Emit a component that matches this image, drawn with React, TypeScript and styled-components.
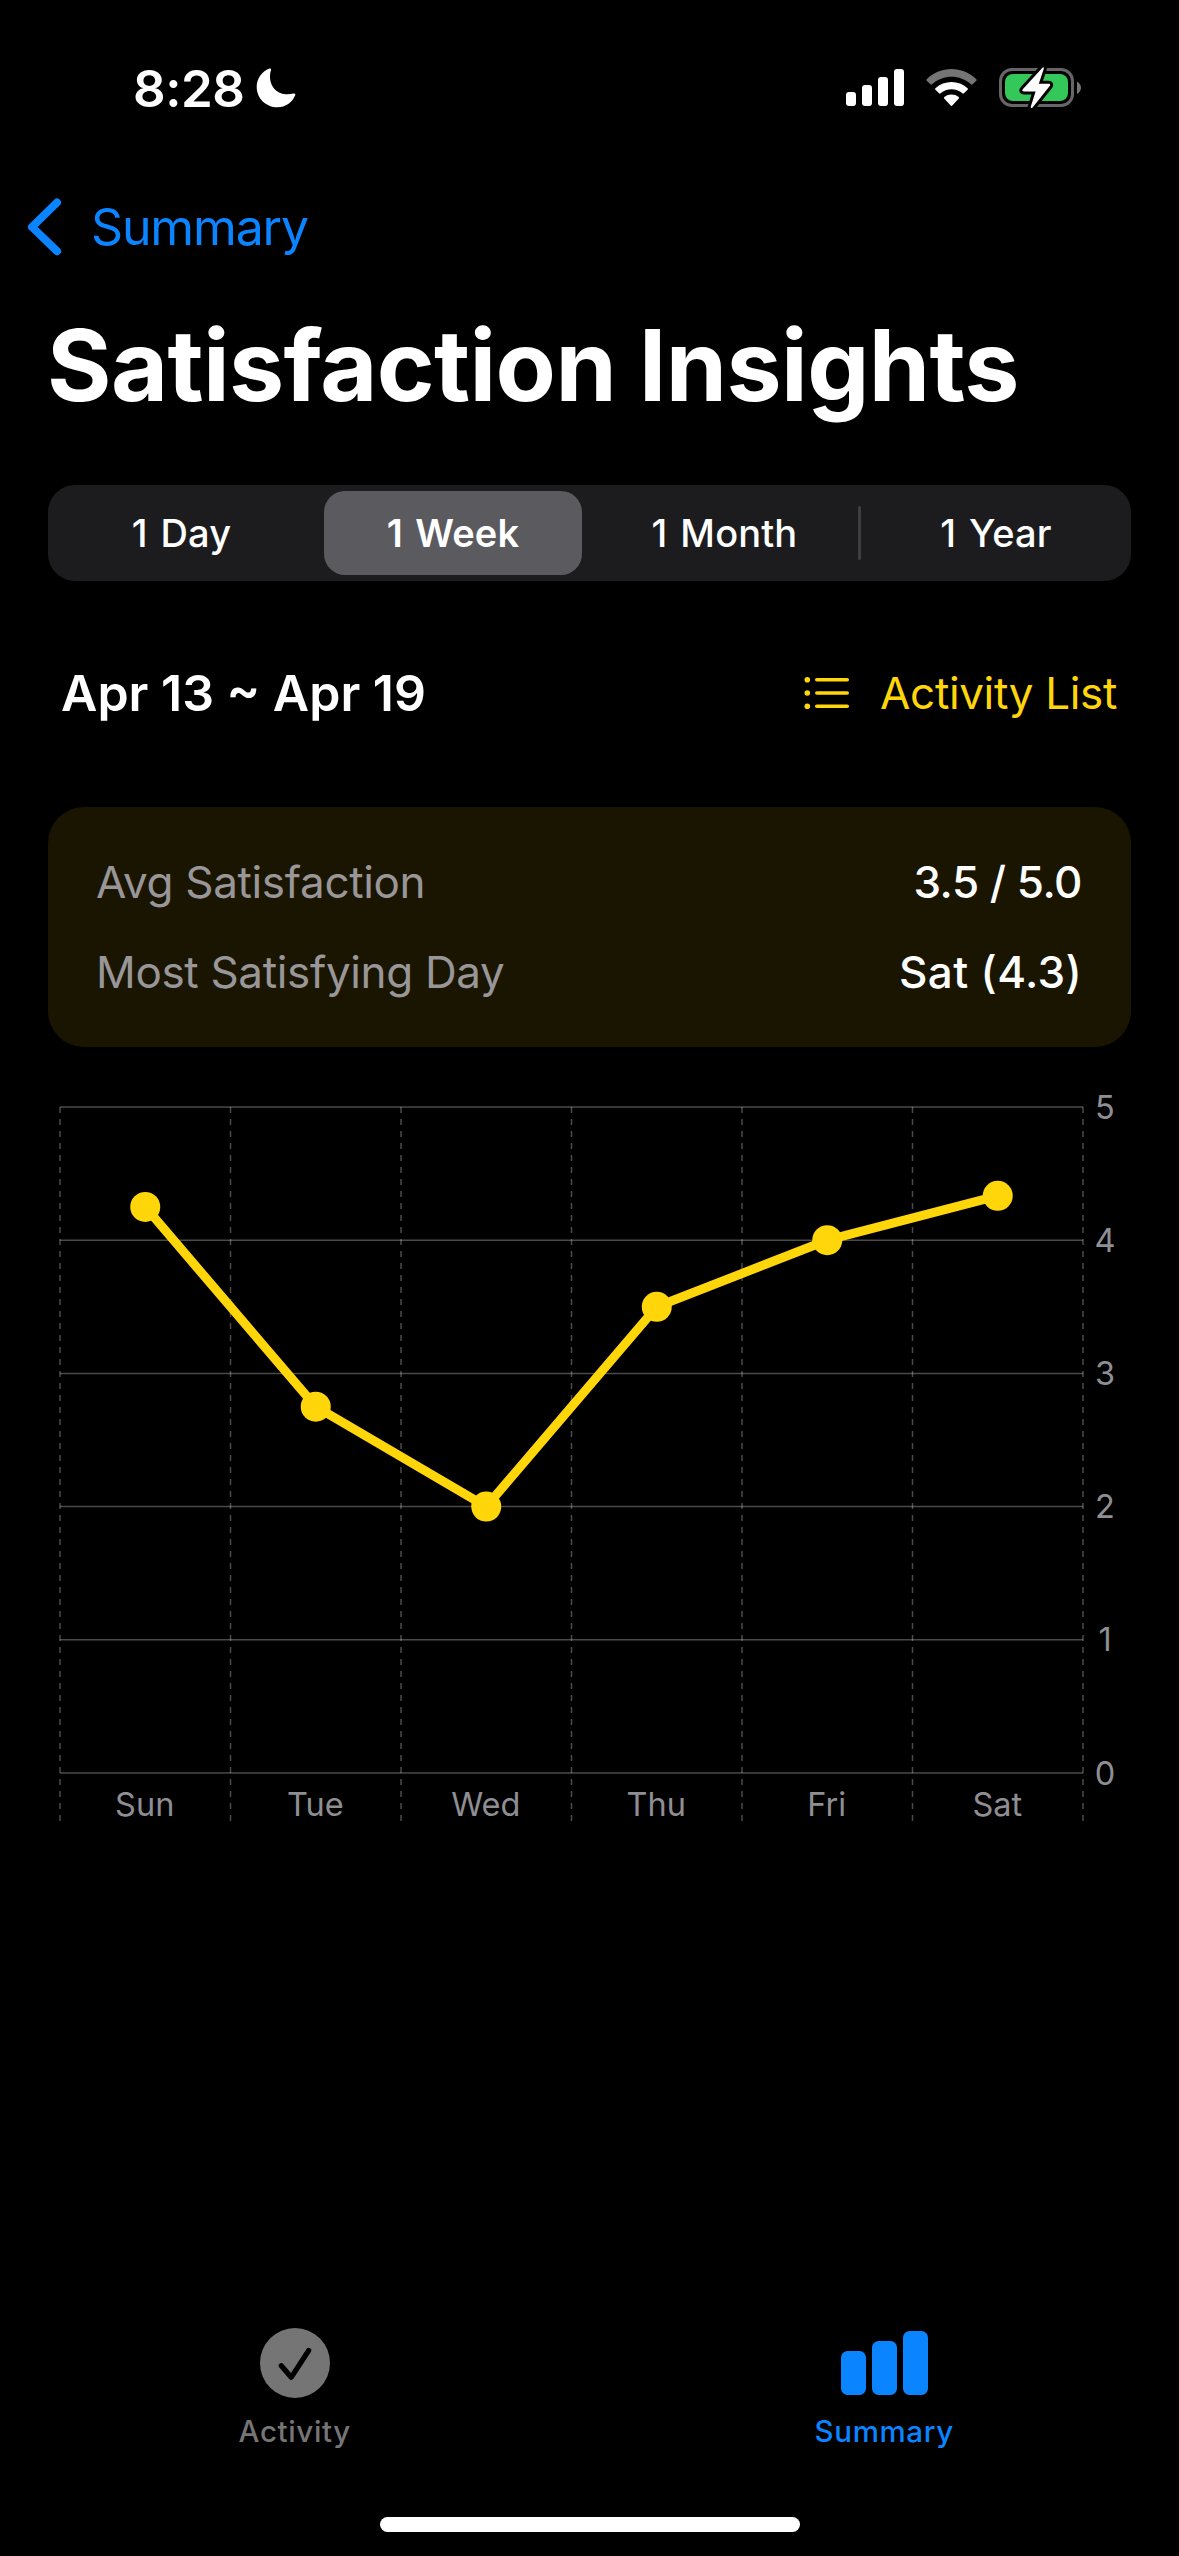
import styled, { createGlobalStyle } from 'styled-components';

const BLUE = '#0a84ff';
const YELLOW = '#ffd60a';

const ranges = ['1 Day', '1 Week', '1 Month', '1 Year'];

const points = [
  { day: 'Sun', value: 4.25 },
  { day: 'Tue', value: 2.75 },
  { day: 'Wed', value: 2 },
  { day: 'Thu', value: 3.5 },
  { day: 'Fri', value: 4 },
  { day: 'Sat', value: 4.333 },
];

const GlobalStyle = createGlobalStyle`
  body {
    margin: 0;
    background: #000;
    color: #fff;
    font-family: Inter, 'Liberation Sans', sans-serif;
    -webkit-font-smoothing: antialiased;
  }

  svg {
    display: block;
    flex: none;
  }
`;

const Screen = styled.div`
  width: 1179px;
  height: 2556px;
  display: flex;
  flex-direction: column;
  overflow: hidden;
  white-space: nowrap;
`;

const StatusBar = styled.header`
  height: 176px;
  display: flex;
  align-items: center;
  justify-content: space-between;
  padding: 0 97px 0 133px;
`;

const Clock = styled.div`
  display: flex;
  align-items: center;
  gap: 12px;
  font-size: 51px;
  font-weight: 580;
  letter-spacing: -0.5px;
`;

const StatusIcons = styled.div`
  display: flex;
  align-items: center;
  gap: 22px;
`;

const BackLink = styled.a`
  height: 102px;
  display: flex;
  align-items: center;
  gap: 29px;
  padding-left: 27px;
  color: ${BLUE};
  font-size: 50px;
  letter-spacing: -1.15px;
`;

const Title = styled.h1`
  margin: 0;
  padding: 1px 0 0 47px;
  font-size: 98.5px;
  font-weight: 700;
  line-height: 174px;
  letter-spacing: -0.62px;
`;

const Segments = styled.div`
  height: 96px;
  margin: 32px 48px 0;
  display: grid;
  grid-template-columns: 267px 276px 267px 1fr;
  border-radius: 27px;
  background: #1c1c1e;
`;

const Segment = styled.button<{ $selected: boolean; $divider: boolean }>`
  position: relative;
  margin: ${({ $selected }) => ($selected ? '6px 9px' : '6px 0')};
  padding: 0;
  border: none;
  border-radius: 21px;
  background: ${({ $selected }) => ($selected ? '#5b5a5f' : 'transparent')};
  color: inherit;
  font: inherit;
  font-size: 38px;
  font-weight: ${({ $selected }) => ($selected ? 580 : 460)};
  letter-spacing: 0.15px;
  word-spacing: 2.5px;

  &:last-child {
    padding-left: 3px;
  }

  &::after {
    content: '';
    display: ${({ $divider }) => ($divider ? 'block' : 'none')};
    position: absolute;
    top: 15px;
    right: -3px;
    width: 3px;
    height: 54px;
    border-radius: 2px;
    background: #3e3e41;
  }
`;

const PeriodRow = styled.div`
  height: 96px;
  margin: 64px 60px 0 61px;
  display: flex;
  align-items: center;
  justify-content: space-between;
`;

const Period = styled.div`
  font-size: 50px;
  font-weight: 590;
`;

const ListLink = styled.a`
  display: flex;
  align-items: center;
  gap: 30px;
  padding-right: 2px;
  color: ${YELLOW};
  font-size: 44px;
  letter-spacing: -0.35px;
`;

const Card = styled.dl`
  box-sizing: border-box;
  height: 240px;
  margin: 66px 48px 0;
  padding: 30px 49px 30px 48px;
  border-radius: 36px;
  background: #1a1500;
`;

const CardRow = styled.div`
  height: 90px;
  display: flex;
  align-items: center;
  justify-content: space-between;
  font-size: 44px;
`;

const CardLabel = styled.dt`
  color: #989698;
  letter-spacing: -0.34px;
`;

const CardValue = styled.dd<{ $tracking: number }>`
  margin: 0;
  font-weight: 500;
  letter-spacing: ${({ $tracking }) => $tracking}px;
`;

const AxisText = styled.text`
  fill: #8e8e93;
  font-size: 32.5px;
`;

const TabBar = styled.nav`
  height: 207px;
  margin-top: auto;
  display: grid;
  grid-template-columns: 1fr 1fr;
`;

const Tab = styled.a<{ $active?: boolean }>`
  display: flex;
  flex-direction: column;
  align-items: center;
  padding-top: 18px;
  color: ${({ $active }) => ($active ? BLUE : '#757575')};
  font-size: 29.5px;
  font-weight: 500;
  line-height: 36px;
  letter-spacing: 0.65px;

  svg {
    margin-bottom: 15px;
  }
`;

const HomeIndicator = styled.div`
  width: 420px;
  height: 15px;
  margin: 0 auto 24px;
  border-radius: 8px;
  background: #fff;
`;

function MoonIcon() {
  return (
    <svg width="40" height="40" viewBox="0 0 40 40" fill="#fff">
      <path d="M12.8.8C14.3.1 15.5.7 15 2.300C14 5 13.800 8 14.100 11C15 19.500 21 25.500 29.500 26.200C32.500 26.400 35 26.100 37.300 25.500C39 25.100 39.700 26 39.200 27.300C36.300 34.500 29.500 39.300 21.500 39.300C10 39.300 .7 30.300 .7 19C.7 11 5.500 3.900 12.800 .8Z" />
    </svg>
  );
}

function SignalIcon() {
  return (
    <svg width="58" height="38" viewBox="0 0 58 38" fill="#fff">
      <rect x="0" y="23" width="10" height="14" rx="3" />
      <rect x="16" y="16" width="10" height="21" rx="3" />
      <rect x="32" y="8" width="10" height="29" rx="3" />
      <rect x="48" y="0" width="10" height="37" rx="3" />
    </svg>
  );
}

function WifiIcon() {
  return (
    <svg width="51" height="38" viewBox="0 0 51 38" fill="#fff">
      <path
        d="M.7 10.200C14.500-3.300 36.500-3.300 50.300 10.200Q51 11 50.300 11.700L46.600 15.300Q45.800 16 45 15.300C34 5.200 17 5.200 6 15.300Q5.200 16 4.400 15.300L.7 11.700Q0 11 .7 10.200Z"
        fill="#757575"
      />
      <path d="M9.400 19.300C18.300 10.800 32.700 10.800 41.600 19.300Q42.300 20 41.600 20.700L37.900 24.300Q37.200 25 36.400 24.300C30.300 18.800 20.700 18.800 14.600 24.300Q13.800 25 13.100 24.300L9.400 20.700Q8.700 20 9.400 19.300Z" />
      <path d="M18.300 28C22.400 24.700 28.600 24.700 32.700 28Q33.500 28.700 32.800 29.400L26.300 36.500Q25.500 37.300 24.700 36.500L18.200 29.400Q17.500 28.700 18.300 28Z" />
    </svg>
  );
}

function BatteryIcon() {
  const bolt =
    'M43.200 1.100C44.200 -.4 45.200 .3 44.700 2L39.800 16.800H49.500C51.300 16.800 51.600 18 50.500 19.300L33.800 40.300C32.500 41.800 31.300 41 31.900 39.300L36.600 24.400H25C23.200 24.400 22.800 23.200 24 22Z';
  return (
    <svg width="83" height="42" viewBox="0 0 83 42">
      <rect x="1.500" y="2.500" width="72" height="36" rx="11.500" fill="none" stroke="#666" strokeWidth="3" />
      <path d="M78 14.500C83.300 17.500 83.300 24 78 27Z" fill="#757575" />
      <rect x="6" y="7" width="63" height="27" rx="8" fill="#34c759" />
      <path d={bolt} fill="#000" stroke="#000" strokeWidth="6" strokeLinejoin="round" />
      <path d={bolt} fill="#fff" />
    </svg>
  );
}

function ChevronIcon() {
  return (
    <svg width="35" height="58" viewBox="0 0 35 58" fill="none">
      <path
        d="M30 4.500L5 29L30 53.200"
        stroke={BLUE}
        strokeWidth="8"
        strokeLinecap="round"
        strokeLinejoin="round"
      />
    </svg>
  );
}

function ListIcon() {
  return (
    <svg width="46" height="34" viewBox="0 0 46 34" fill={YELLOW}>
      {[3.7, 17, 30.3].map((y) => (
        <g key={y}>
          <circle cx="3.300" cy={y} r="2.800" />
          <rect x="11" y={y - 1.8} width="34" height="3.600" rx="1.800" />
        </g>
      ))}
    </svg>
  );
}

function CheckIcon() {
  return (
    <svg width="70" height="70" viewBox="0 0 70 70" fill="none">
      <circle cx="35" cy="35" r="35" fill="#757575" />
      <path
        d="M21.300 37.800L31.200 49.300L48.700 22.500"
        stroke="#000"
        strokeWidth="5.200"
        strokeLinecap="round"
        strokeLinejoin="round"
      />
    </svg>
  );
}

function BarsIcon() {
  return (
    <svg width="87" height="70" viewBox="0 0 87 70" fill={BLUE}>
      <rect x="0" y="23" width="25" height="44" rx="6.500" />
      <rect x="31" y="13" width="25" height="54" rx="6.500" />
      <rect x="62" y="3" width="25" height="64" rx="6.500" />
    </svg>
  );
}

function SatisfactionChart() {
  const left = 60;
  const top = 60;
  const column = 170.5;
  const step = 133.2;
  const right = left + column * points.length;
  const bottom = top + step * 5;

  const toX = (i: number) => left + column * (i + 0.5);
  const toY = (value: number) => bottom - value * step;
  const line = points.map((p, i) => `${toX(i)},${toY(p.value)}`).join(' ');

  return (
    <svg width="1179" height="800" viewBox="0 0 1179 800">
      <g stroke="#fff" strokeOpacity="0.29" strokeWidth="1.500">
        {[0, 1, 2, 3, 4, 5].map((v) => (
          <line key={v} x1={left} x2={right} y1={toY(v)} y2={toY(v)} />
        ))}
        {[0, 1, 2, 3, 4, 5, 6].map((i) => (
          <line
            key={i}
            x1={left + column * i}
            x2={left + column * i}
            y1={top}
            y2={774}
            strokeDasharray="6 6"
          />
        ))}
      </g>

      <polyline points={line} fill="none" stroke={YELLOW} strokeWidth="9" strokeLinejoin="round" />
      {points.map((p, i) => (
        <circle key={p.day} cx={toX(i)} cy={toY(p.value)} r="15" fill={YELLOW} />
      ))}

      {[0, 1, 2, 3, 4, 5].map((v) => (
        <AxisText key={v} x={1105} y={toY(v) + 11.5} textAnchor="middle">
          {v}
        </AxisText>
      ))}
      {points.map((p, i) => (
        <AxisText key={p.day} x={toX(i) - 0.5} y={768.5} textAnchor="middle">
          {p.day}
        </AxisText>
      ))}
    </svg>
  );
}

export default function App() {
  const selected = '1 Week';

  return (
    <Screen>
      <GlobalStyle />
      <StatusBar>
        <Clock>
          8:28
          <MoonIcon />
        </Clock>
        <StatusIcons>
          <SignalIcon />
          <WifiIcon />
          <BatteryIcon />
        </StatusIcons>
      </StatusBar>

      <BackLink>
        <ChevronIcon />
        Summary
      </BackLink>
      <Title>Satisfaction Insights</Title>

      <Segments>
        {ranges.map((range) => (
          <Segment key={range} $selected={range === selected} $divider={range === '1 Month'}>
            {range}
          </Segment>
        ))}
      </Segments>

      <PeriodRow>
        <Period>Apr 13 ~ Apr 19</Period>
        <ListLink>
          <ListIcon />
          Activity List
        </ListLink>
      </PeriodRow>

      <Card>
        <CardRow>
          <CardLabel>Avg Satisfaction</CardLabel>
          <CardValue $tracking={-0.5}>3.5 / 5.0</CardValue>
        </CardRow>
        <CardRow>
          <CardLabel>Most Satisfying Day</CardLabel>
          <CardValue $tracking={0.35}>Sat (4.3)</CardValue>
        </CardRow>
      </Card>

      <SatisfactionChart />

      <TabBar>
        <Tab>
          <CheckIcon />
          Activity
        </Tab>
        <Tab $active>
          <BarsIcon />
          Summary
        </Tab>
      </TabBar>
      <HomeIndicator />
    </Screen>
  );
}
